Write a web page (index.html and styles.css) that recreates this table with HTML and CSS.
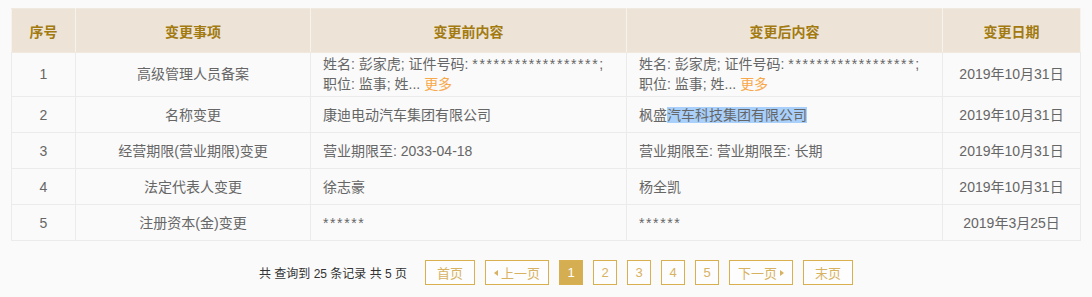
FILE: index.html
```html
<!DOCTYPE html>
<html lang="zh-CN">
<head>
<meta charset="utf-8">
<link rel="stylesheet" href="styles.css">
</head>
<body>
<div class="wrap">
  <table class="changes">
    <colgroup>
      <col class="c1"><col class="c2"><col class="c3"><col class="c4"><col class="c5">
    </colgroup>
    <thead>
      <tr><th>序号</th><th>变更事项</th><th>变更前内容</th><th>变更后内容</th><th>变更日期</th></tr>
    </thead>
    <tbody>
      <tr class="tall">
        <td class="ctr">1</td>
        <td class="ctr">高级管理人员备案</td>
        <td><span class="line">姓名: 彭家虎; 证件号码: <span class="stars">******************</span>;</span><span class="line">职位: 监事; 姓... <a class="more">更多</a></span></td>
        <td><span class="line">姓名: 彭家虎; 证件号码: <span class="stars">******************</span>;</span><span class="line">职位: 监事; 姓... <a class="more">更多</a></span></td>
        <td class="ctr">2019年10月31日</td>
      </tr>
      <tr>
        <td class="ctr">2</td>
        <td class="ctr">名称变更</td>
        <td>康迪电动汽车集团有限公司</td>
        <td>枫盛<span class="sel">汽车科技集团有限公司</span></td>
        <td class="ctr">2019年10月31日</td>
      </tr>
      <tr>
        <td class="ctr">3</td>
        <td class="ctr">经营期限(营业期限)变更</td>
        <td>营业期限至: 2033-04-18</td>
        <td>营业期限至: 营业期限至: 长期</td>
        <td class="ctr">2019年10月31日</td>
      </tr>
      <tr>
        <td class="ctr">4</td>
        <td class="ctr">法定代表人变更</td>
        <td>徐志豪</td>
        <td>杨全凯</td>
        <td class="ctr">2019年10月31日</td>
      </tr>
      <tr>
        <td class="ctr">5</td>
        <td class="ctr">注册资本(金)变更</td>
        <td><span class="stars">******</span></td>
        <td><span class="stars">******</span></td>
        <td class="ctr">2019年3月25日</td>
      </tr>
    </tbody>
  </table>

  <div class="pager">
    <span class="summary">共 查询到 25 条记录 共 5 页</span>
    <a class="pbtn wide">首页</a>
    <a class="pbtn wider"><i class="tri-l"></i>上一页</a>
    <a class="pbtn num active">1</a>
    <a class="pbtn num">2</a>
    <a class="pbtn num">3</a>
    <a class="pbtn num">4</a>
    <a class="pbtn num">5</a>
    <a class="pbtn wider">下一页<i class="tri-r"></i></a>
    <a class="pbtn wide">末页</a>
  </div>
</div>
</body>
</html>
```

FILE: styles.css
```css
html, body {
  margin: 0;
  padding: 0;
  background: #fafafa;
}
body {
  font-family: "Liberation Sans", "Noto Sans CJK SC", sans-serif;
  color: #666;
}
.wrap {
  padding: 8px 12px 0 11px;
}
.changes {
  width: 1069px;
  border-collapse: collapse;
  table-layout: fixed;
  font-size: 14px;
}
.c1 { width: 64px; }
.c2 { width: 235px; }
.c3 { width: 316px; }
.c4 { width: 316px; }
.c5 { width: 138px; }

.changes th {
  height: 43px;
  padding: 0;
  background: #ede4d7;
  color: #a27a10;
  font-weight: bold;
  font-size: 14px;
  border: 1px solid #efe9df;
  border-left-color: #f6f2ec;
  border-right-color: #f6f2ec;
  text-align: center;
}
.changes td {
  height: 35px;
  padding: 0 12px;
  border: 1px solid #ebebeb;
  line-height: 20px;
  vertical-align: middle;
  white-space: nowrap;
  overflow: hidden;
}
.changes tr.tall td {
  height: 42px;
  padding-top: 0;
  padding-bottom: 1px;
}
.changes td.ctr {
  text-align: center;
}
.line {
  display: block;
}
.stars {
  letter-spacing: 1.6px;
}
.more {
  color: #f8a84a;
  cursor: pointer;
}
.sel {
  background: #a8d0fb;
}

.pager {
  display: flex;
  align-items: center;
  justify-content: center;
  width: 1069px;
  padding-left: 21px;
  box-sizing: border-box;
  margin-top: 19px;
  gap: 10px;
}
.summary {
  color: #333;
  font-size: 12px;
  margin-right: 8px;
  white-space: nowrap;
}
.pbtn {
  box-sizing: border-box;
  height: 25px;
  border: 1px solid #d8b050;
  color: #d7b262;
  font-size: 13px;
  display: flex;
  align-items: center;
  justify-content: center;
  background: #fdfdfd;
}
.pbtn.wide { width: 50px; }
.pbtn.wider { width: 64px; }
.pbtn.num { width: 24px; }
.pbtn.active {
  background: #d5ae52;
  color: #fff;
}
.tri-l, .tri-r {
  display: inline-block;
  width: 0;
  height: 0;
  border-top: 3px solid transparent;
  border-bottom: 3px solid transparent;
}
.tri-l {
  border-right: 4px solid #d7b262;
  margin-right: 3px;
}
.tri-r {
  border-left: 4px solid #d7b262;
  margin-left: 3px;
}
```
